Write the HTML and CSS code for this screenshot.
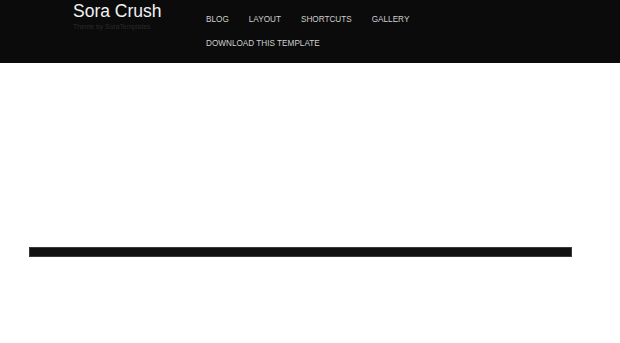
FILE: index.html
```html
<!DOCTYPE html>
<html lang="en">
<head>
    <meta charset="UTF-8">
    <meta name="viewport" content="width=device-width, initial-scale=1.0">
    <title>Sora Crush</title>
    <link rel="stylesheet" href="styles.css">
</head>
<body>

<div class="header">
    <div class="header-inner">
        <div class="branding">
            <h1 class="site-title">Sora Crush</h1>
            <p class="site-desc">Theme by SoraTemplates</p>
        </div>
        <ul class="menu">
            <li><a href="#">Blog</a></li>
            <li><a href="#">Layout</a></li>
            <li><a href="#">Shortcuts</a></li>
            <li><a href="#">Gallery</a></li>
            <li><a href="#">Download This Template</a></li>
        </ul>
    </div>
</div>

<div class="content">
    <div class="slider-bar"></div>
</div>

</body>
</html>
```

FILE: styles.css
```css
body {
    font-family: "Liberation Sans", Arial, sans-serif;
    background-color: #ffffff;
    margin: 0;
}

.header {
    background-color: #0b0b0b;
    height: 63px;
}

.header-inner {
    display: flex;
    padding-left: 73px;
}

.branding {
    width: 123px;
}

.site-title {
    margin: 0;
    padding-top: 1px;
    font-size: 17.5px;
    font-weight: normal;
    line-height: 20px;
    color: #f2f2f2;
}

.site-desc {
    margin: 2px 0 0;
    font-size: 6.8px;
    color: #2a2a2a;
}

.menu {
    list-style: none;
    margin: 0;
    padding: 8px 0 0;
    display: flex;
    flex-wrap: wrap;
    width: 260px;
}

.menu li a {
    display: block;
    padding: 0 10px;
    font-size: 8.2px;
    line-height: 24px;
    text-transform: uppercase;
    text-decoration: none;
    color: #cfcfcf;
}

.content {
    padding: 184px 0 0 29px;
}

.slider-bar {
    width: 541px;
    height: 8px;
    background-color: #111111;
    border: 1px solid #3a3a3a;
}
```
